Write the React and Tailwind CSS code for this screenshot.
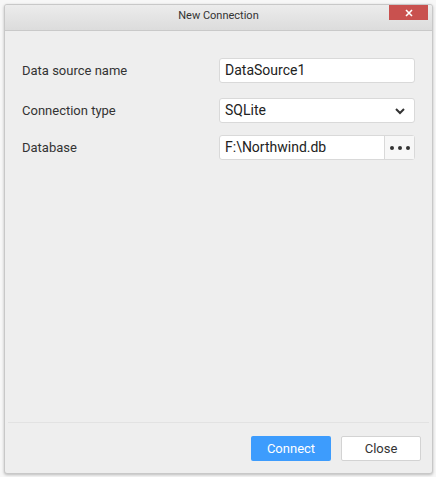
export default function App() {
  return (
    <div className="w-[436px] h-[477px] bg-[#f7f7f7] relative overflow-hidden" style={{ fontFamily: "Roboto, 'Liberation Sans', sans-serif" }}>
      <div className="absolute left-[4px] top-[4px] w-[429px] h-[470px] flex flex-col bg-[#eeeeee] border border-[#c8c8c8] rounded-[3px] shadow-[0_1px_3px_rgba(0,0,0,0.25)] overflow-hidden">
        <div className="h-[26px] shrink-0 relative flex items-center justify-center bg-gradient-to-b from-[#ececec] to-[#dcdcdc] border-b border-[#c9c9c9]">
          <span className="text-[11px] text-[#333333] -mt-[2px]">New Connection</span>
          <div className="absolute right-[4px] top-0 w-[39px] h-[15px] bg-[#c9514f] flex items-center justify-center">
            <svg width="8" height="8" viewBox="0 0 8 8"><path d="M1 1L7 7M7 1L1 7" stroke="#ffffff" strokeWidth="1.6" /></svg>
          </div>
        </div>
        <div className="flex-1 flex flex-col px-[17px] pt-[27px] gap-[15px]">
          <div className="flex items-center h-[25px]">
            <span className="w-[197px] text-[13px] text-[#333333]">Data source name</span>
            <div className="w-[196px] h-[25px] bg-white border border-[#d9d9d9] rounded-[3px] flex items-center px-[5px] text-[14px] text-[#222222]">DataSource1</div>
          </div>
          <div className="flex items-center h-[25px]">
            <span className="w-[197px] text-[13px] text-[#333333]">Connection type</span>
            <div className="w-[196px] h-[25px] bg-white border border-[#d9d9d9] rounded-[3px] flex items-center justify-between px-[5px] text-[14px] text-[#222222]">
              <span>SQLite</span>
              <svg width="12" height="8" viewBox="0 0 12 8" className="mr-[3px]"><path d="M2 2L6 6L10 2" stroke="#333333" strokeWidth="2" fill="none" /></svg>
            </div>
          </div>
          <div className="flex items-center h-[25px] -mt-[3px]">
            <span className="w-[197px] text-[13px] text-[#333333]">Database</span>
            <div className="w-[196px] h-[25px] bg-white border border-[#d9d9d9] rounded-[3px] flex items-center text-[14px] text-[#222222]">
              <span className="flex-1 px-[5px]">F:\Northwind.db</span>
              <div className="w-[30px] h-full border-l border-[#d9d9d9] bg-[#f7f7f7] flex items-center justify-center gap-[4px]">
                <span className="w-[4px] h-[4px] rounded-full bg-[#333333]" />
                <span className="w-[4px] h-[4px] rounded-full bg-[#333333]" />
                <span className="w-[4px] h-[4px] rounded-full bg-[#333333]" />
              </div>
            </div>
          </div>
        </div>
        <div className="mx-[3px] border-t border-[#e2e2e2]" />
        <div className="h-[50px] shrink-0 flex justify-end items-start pt-[13px] pr-[11px] gap-[10px]">
          <div className="w-[80px] h-[25px] bg-[#3d9cfd] rounded-[2px] flex items-center justify-center text-[13px] text-white">Connect</div>
          <div className="w-[80px] h-[25px] bg-white border border-[#d3d3d3] rounded-[2px] flex items-center justify-center text-[13px] text-[#333333]">Close</div>
        </div>
      </div>
    </div>
  );
}
